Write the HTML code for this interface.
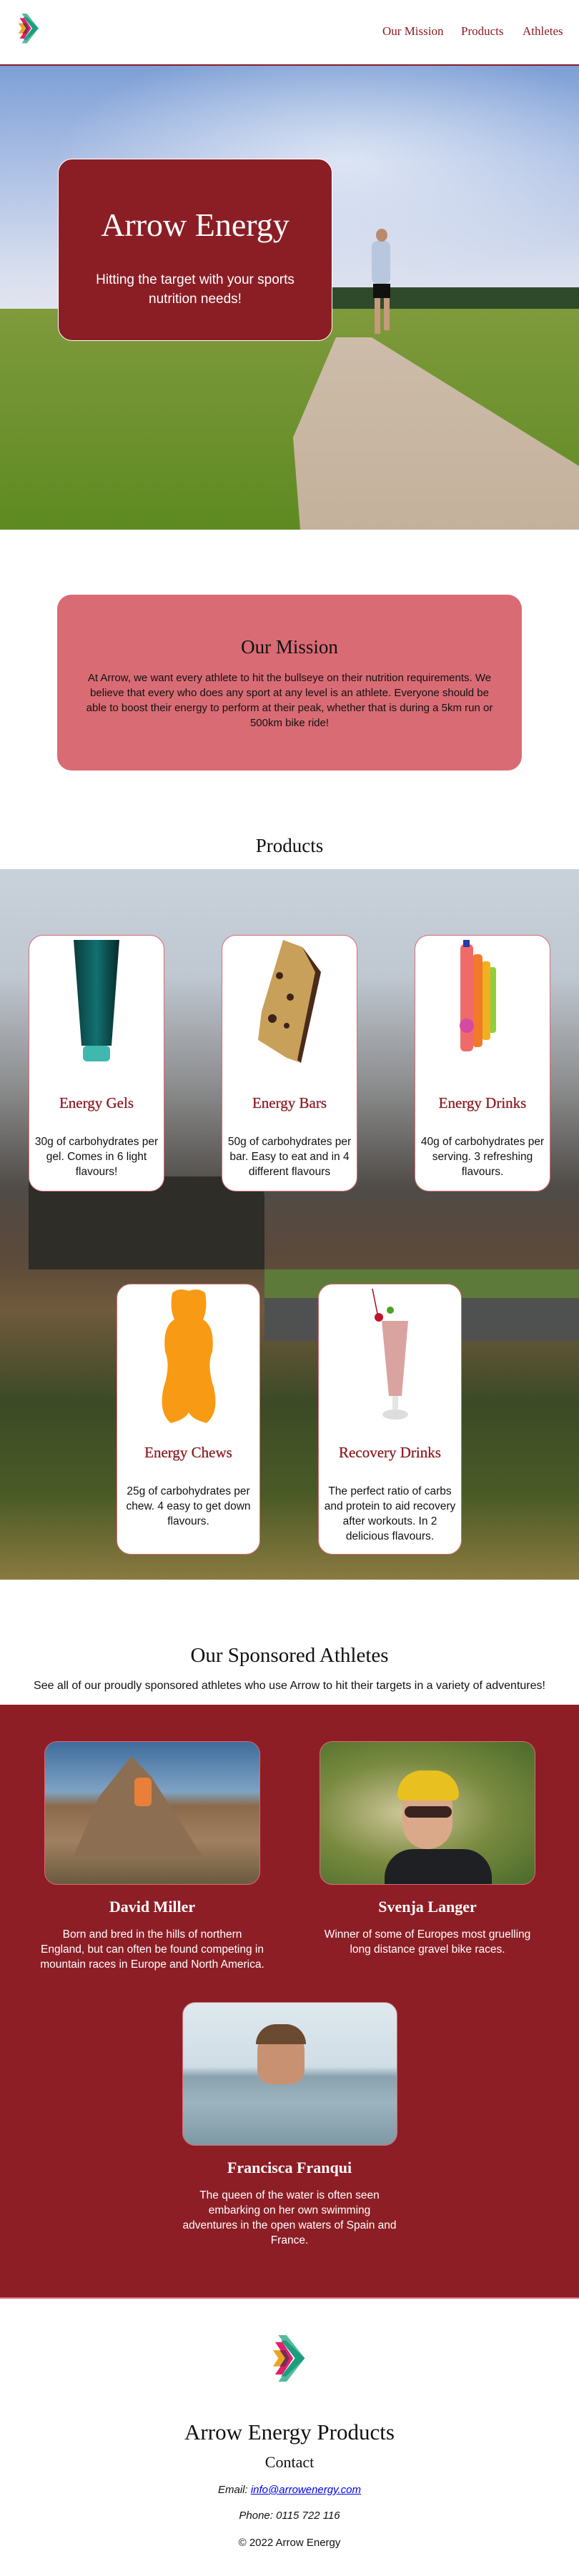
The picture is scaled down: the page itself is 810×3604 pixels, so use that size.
<!DOCTYPE html>
<html><head><meta charset="utf-8"><style>
*{margin:0;padding:0;box-sizing:border-box}
body{width:810px;height:3604px;position:relative;background:#fff;font-family:"Liberation Sans",sans-serif;overflow:hidden}
.a{position:absolute}
.c{text-align:center}
.serif{font-family:"Liberation Serif",serif}
.nav{font-family:"Liberation Serif",serif;font-size:17px;color:#8b1c24;top:34px}
.card{position:absolute;background:#fff;border:1px solid #d96b74;border-radius:20px;overflow:hidden}
.card h3{position:absolute;left:0;right:0;text-align:center;font-family:"Liberation Serif",serif;font-weight:normal;font-size:21px;color:#8b1c24;-webkit-text-stroke:.3px #8b1c24}
.card p{position:absolute;left:2px;right:2px;text-align:center;font-size:15.5px;line-height:21px;color:#111}
.ath{color:#fff;text-align:center}
.ath h3{font-family:"Liberation Serif",serif;font-size:22px;font-weight:bold}
.ath p{font-size:15.5px;line-height:21px}
.img{position:absolute;border:1px solid #d96b74;border-radius:18px;overflow:hidden}
</style></head><body>

<svg class="a" style="left:21px;top:19px" width="38" height="42" viewBox="0 0 120 175">
<polygon points="20,0 50,0 118,86 50,173 20,173 82,86" fill="#56b99b"/>
<polygon points="30,20 48,20 118,86 48,153 30,153 82,86" fill="#1a9e7e"/>
<polygon points="8,26 35,26 75,86 35,146 8,146 48,86" fill="#e21f6c"/>
<polygon points="0,56 25,56 45,86 25,116 0,116 20,86" fill="#e9a623"/>
<polygon points="25,56 45,56 60,86 45,116 25,116 45,86" fill="#6e3350"/>
</svg>
<div class="a nav" style="left:535px">Our Mission</div>
<div class="a nav" style="left:645px">Products</div>
<div class="a nav" style="left:731px">Athletes</div>
<div class="a" style="left:0;top:90px;width:810px;height:2px;background:#8b1c24"></div>

<div class="a" style="left:0;top:92px;width:810px;height:649px;overflow:hidden;background:linear-gradient(180deg,#7d9fd6 0%,#a9bde3 20%,#d9dfee 45%,#e8e8ee 58%,#c9ccd2 66%,#6d8a3a 70%,#6b8f2c 100%)">
  <div class="a" style="left:0;top:0;width:810px;height:330px;background:radial-gradient(ellipse at 60% 40%,rgba(255,255,255,.6),rgba(255,255,255,0) 60%)"></div>
  <div class="a" style="left:460px;top:310px;width:350px;height:30px;background:#2f4a2a"></div>
  <div class="a" style="left:0;top:340px;width:810px;height:309px;background:linear-gradient(180deg,#7f9a3c,#5e8a22)"></div>
  <div class="a" style="left:0;top:0;width:810px;height:649px;background:linear-gradient(180deg,#d7cbbb,#c4b19c);clip-path:polygon(470px 380px,520px 380px,810px 560px,810px 649px,420px 649px,410px 520px)"></div>
  <div class="a" style="left:520px;top:245px;width:26px;height:60px;background:#b8c6de;border-radius:8px"></div>
  <div class="a" style="left:526px;top:228px;width:16px;height:18px;background:#b98a6c;border-radius:50%"></div>
  <div class="a" style="left:522px;top:305px;width:24px;height:20px;background:#111"></div>
  <div class="a" style="left:524px;top:325px;width:8px;height:50px;background:#c59a7e"></div>
  <div class="a" style="left:537px;top:325px;width:8px;height:45px;background:#c59a7e"></div>
</div>
<div class="a" style="left:81px;top:222px;width:384px;height:255px;background:#8b1e25;border:1px solid #fff;border-radius:20px;color:#fff;text-align:center">
  <div style="position:absolute;top:64px;left:0;right:0;font-family:'Liberation Serif',serif;font-size:46px;line-height:56px">Arrow Energy</div>
  <div style="position:absolute;top:155px;left:0;right:0;font-size:19px;line-height:27px">Hitting the target with your sports<br>nutrition needs!</div>
</div>

<div class="a c" style="left:80px;top:832px;width:650px;height:246px;background:#d96b74;border-radius:20px">
  <div class="serif" style="position:absolute;top:58px;left:0;right:0;font-size:27px;line-height:30px;color:#111">Our Mission</div>
  <div style="position:absolute;top:106px;left:40px;right:40px;font-size:15px;line-height:21px;color:#111">At Arrow, we want every athlete to hit the bullseye on their nutrition requirements. We believe that every who does any sport at any level is an athlete. Everyone should be able to boost their energy to perform at their peak, whether that is during a 5km run or 500km bike ride!</div>
</div>

<div class="a c serif" style="left:0;top:1166px;width:810px;font-size:27px;line-height:34px;color:#111">Products</div>

<div class="a" style="left:0;top:1216px;width:810px;height:994px;overflow:hidden;background:linear-gradient(180deg,#c9d1db 0%,#bfc7d0 15%,#8e8f90 30%,#4f4b47 45%,#5c4a3a 55%,#6f5a3c 62%,#3c4a26 75%,#4a5a26 88%,#8a7a40 100%)">
  <div class="a" style="left:40px;top:430px;width:330px;height:130px;background:#2e2d28;border-radius:10px 30px 0 0"></div>
  <div class="a" style="left:370px;top:600px;width:440px;height:60px;background:#4f5151"></div>
  <div class="a" style="left:370px;top:560px;width:440px;height:40px;background:#5d7a3a"></div>
</div>

<div class="card" style="left:40px;top:1308px;width:190px;height:359px">
  <svg class="a" style="left:60px;top:6px" width="70" height="170" viewBox="0 0 70 170"><defs><linearGradient id="g1" x1="0" x2="1"><stop offset="0" stop-color="#0a3c3c"/><stop offset=".5" stop-color="#127070"/><stop offset="1" stop-color="#062a2a"/></linearGradient></defs><path d="M2 0H66L55 148H13Z" fill="url(#g1)"/><rect x="15" y="148" width="38" height="22" rx="6" fill="#3fb8b0"/></svg>
  <h3 style="top:222px">Energy Gels</h3>
  <p style="top:278px">30g of carbohydrates per gel. Comes in 6 light flavours!</p>
</div>
<div class="card" style="left:310px;top:1308px;width:190px;height:359px">
  <svg class="a" style="left:50px;top:6px" width="90" height="172" viewBox="0 0 90 172"><path d="M35 0 L62 10 L88 45 L60 172 L40 165 L0 140 L5 100Z" fill="#c9a05a"/><path d="M62 10 L88 45 L60 172 L55 168 L80 45Z" fill="#4a2a1a"/><circle cx="30" cy="50" r="5" fill="#3a2418"/><circle cx="45" cy="80" r="5" fill="#3a2418"/><circle cx="20" cy="110" r="6" fill="#3a2418"/><circle cx="40" cy="120" r="4" fill="#3a2418"/></svg>
  <h3 style="top:222px">Energy Bars</h3>
  <p style="top:278px">50g of carbohydrates per bar. Easy to eat and in 4 different flavours</p>
</div>
<div class="card" style="left:580px;top:1308px;width:190px;height:359px">
  <svg class="a" style="left:55px;top:6px" width="70" height="190" viewBox="0 0 70 190"><rect x="48" y="38" width="10" height="92" rx="4" fill="#8fcf3a"/><rect x="38" y="30" width="12" height="110" rx="4" fill="#f0b020"/><rect x="25" y="20" width="14" height="130" rx="5" fill="#f07a2a"/><rect x="8" y="6" width="18" height="150" rx="6" fill="#f06a6a"/><rect x="12" y="0" width="9" height="10" fill="#2a3aa0"/><circle cx="17" cy="120" r="10" fill="#d44aa0"/></svg>
  <h3 style="top:222px">Energy Drinks</h3>
  <p style="top:278px">40g of carbohydrates per serving. 3 refreshing flavours.</p>
</div>

<div class="card" style="left:163px;top:1796px;width:201px;height:379px">
  <svg class="a" style="left:55px;top:4px" width="90" height="190" viewBox="0 0 90 190"><path d="M22 8 Q30 0 45 5 Q60 0 68 8 Q72 30 65 45 Q82 55 78 90 Q70 110 80 140 Q88 175 70 190 Q50 185 45 175 Q40 185 20 190 Q2 175 10 140 Q20 110 12 90 Q8 55 25 45 Q18 30 22 8Z" fill="#f99a14"/></svg>
  <h3 style="top:223px">Energy Chews</h3>
  <p style="top:279px">25g of carbohydrates per chew. 4 easy to get down flavours.</p>
</div>
<div class="card" style="left:445px;top:1796px;width:201px;height:379px">
  <svg class="a" style="left:70px;top:6px" width="60" height="190" viewBox="0 0 60 190"><path d="M18 45 H55 L46 150 H28Z" fill="#d9a3a0"/><rect x="33" y="150" width="8" height="20" fill="#e5e5e5"/><ellipse cx="37" cy="176" rx="18" ry="7" fill="#ddd"/><circle cx="14" cy="40" r="6" fill="#c0142a"/><path d="M12 35 L5 0" stroke="#a01020" stroke-width="1.5"/><circle cx="30" cy="30" r="5" fill="#4aa02a"/></svg>
  <h3 style="top:223px">Recovery Drinks</h3>
  <p style="top:279px">The perfect ratio of carbs and protein to aid recovery after workouts. In 2 delicious flavours.</p>
</div>

<div class="a c serif" style="left:0;top:2299px;width:810px;font-size:29px;line-height:34px;color:#111">Our Sponsored Athletes</div>
<div class="a c" style="left:0;top:2349px;width:810px;font-size:16px;line-height:20px;color:#111">See all of our proudly sponsored athletes who use Arrow to hit their targets in a variety of adventures!</div>

<div class="a" style="left:0;top:2385px;width:810px;height:831px;background:#8d1e25;border-bottom:2px solid #d96b74"></div>

<div class="img" style="left:62px;top:2436px;width:302px;height:201px;background:linear-gradient(180deg,#3f6c9c 0%,#7fa3c4 35%,#8a6a4a 45%,#a08060 70%,#6a5a40 100%)">
  <div class="a" style="left:40px;top:20px;width:180px;height:140px;background:#8c6e52;clip-path:polygon(0 100%,20% 40%,45% 0,60% 20%,80% 60%,100% 100%)"></div>
  <div class="a" style="left:125px;top:50px;width:24px;height:40px;background:#e8803a;border-radius:6px"></div>
</div>
<div class="ath a" style="left:55px;top:2655px;width:316px"><h3>David Miller</h3><p style="margin-top:15px">Born and bred in the hills of northern England, but can often be found competing in mountain races in Europe and North America.</p></div>

<div class="img" style="left:447px;top:2436px;width:302px;height:201px;background:radial-gradient(ellipse at 40% 50%,#cfc79a,#7a8a40 50%,#4a6a2a 100%)">
  <div class="a" style="left:90px;top:150px;width:150px;height:60px;background:#1e2024;border-radius:40px 40px 0 0"></div>
  <div class="a" style="left:115px;top:55px;width:70px;height:95px;background:#d9a98a;border-radius:35px"></div>
  <div class="a" style="left:108px;top:40px;width:86px;height:42px;background:#e8c020;border-radius:43px 43px 10px 10px"></div>
  <div class="a" style="left:118px;top:90px;width:66px;height:16px;background:#3a2420;border-radius:8px"></div>
</div>
<div class="ath a" style="left:440px;top:2655px;width:316px"><h3>Svenja Langer</h3><p style="margin-top:15px">Winner of some of Europes most gruelling long distance gravel bike races.</p></div>

<div class="img" style="left:255px;top:2801px;width:301px;height:201px;background:linear-gradient(180deg,#dfe9ee 0%,#cfdde5 45%,#8aa2ae 52%,#9cb4bf 70%,#7e98a4 100%)">
  <div class="a" style="left:104px;top:34px;width:66px;height:80px;background:#c89272;border-radius:33px 33px 20px 20px"></div>
  <div class="a" style="left:102px;top:30px;width:70px;height:28px;background:#6a4a30;border-radius:35px 35px 0 0"></div>
</div>
<div class="ath a" style="left:232px;top:3020px;width:346px"><h3>Francisca Franqui</h3><p style="margin-top:15px;padding:0 20px">The queen of the water is often seen embarking on her own swimming adventures in the open waters of Spain and France.</p></div>

<svg class="a" style="left:374px;top:3267px" width="61" height="66" viewBox="0 0 120 175">
<polygon points="20,0 50,0 118,86 50,173 20,173 82,86" fill="#56b99b"/>
<polygon points="30,20 48,20 118,86 48,153 30,153 82,86" fill="#1a9e7e"/>
<polygon points="8,26 35,26 75,86 35,146 8,146 48,86" fill="#e21f6c"/>
<polygon points="0,56 25,56 45,86 25,116 0,116 20,86" fill="#e9a623"/>
<polygon points="25,56 45,56 60,86 45,116 25,116 45,86" fill="#6e3350"/>
</svg>
<div class="a c serif" style="left:0;top:3385px;width:810px;font-size:31px;line-height:36px;color:#111">Arrow Energy Products</div>
<div class="a c serif" style="left:0;top:3432px;width:810px;font-size:22px;line-height:26px;color:#111">Contact</div>
<div class="a c" style="left:0;top:3475px;width:810px;font-size:15px;font-style:italic;color:#111">Email: <span style="color:#00e;text-decoration:underline">info@arrowenergy.com</span></div>
<div class="a c" style="left:0;top:3511px;width:810px;font-size:15px;font-style:italic;color:#111">Phone: 0115 722 116</div>
<div class="a c" style="left:0;top:3549px;width:810px;font-size:15px;color:#111">© 2022 Arrow Energy</div>
</body></html>
